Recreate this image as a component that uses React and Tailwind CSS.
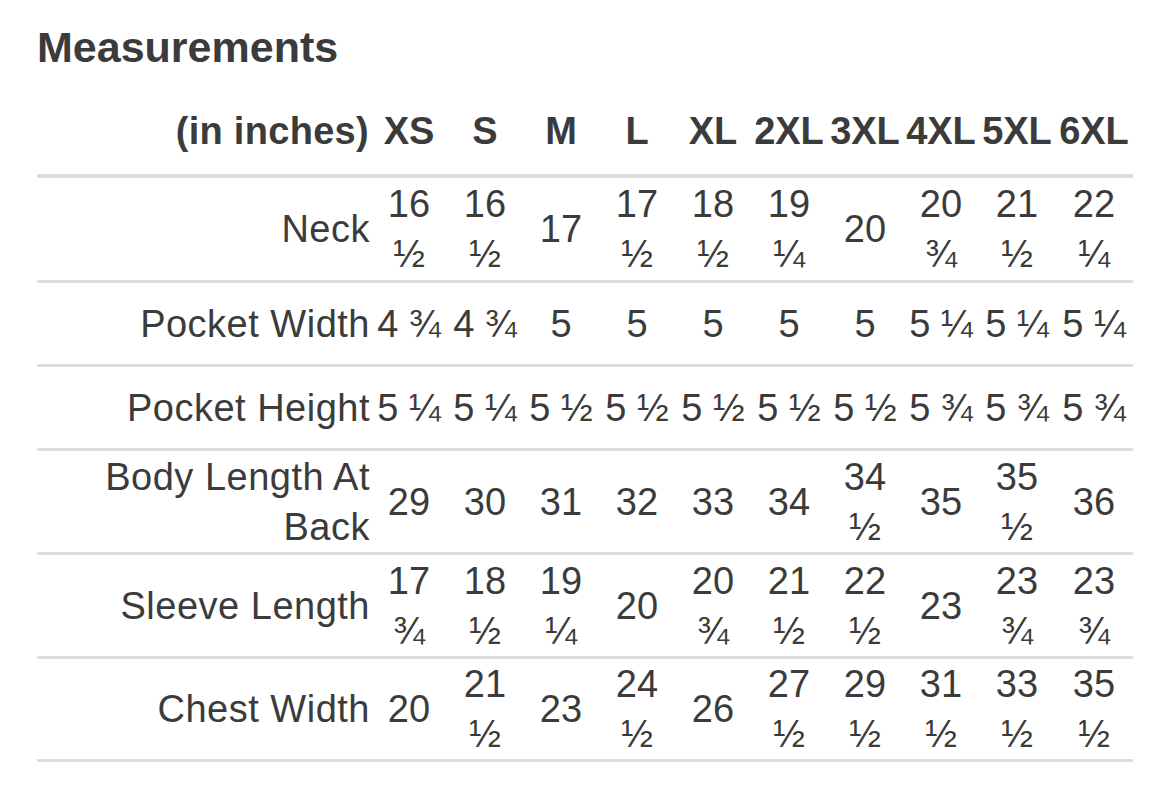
import React from 'react';

const SIZES = ['XS', 'S', 'M', 'L', 'XL', '2XL', '3XL', '4XL', '5XL', '6XL'];

// heights include the 3px bottom border
const ROWS = [
    {
        label: 'Neck',
        height: 'h-[105px]',
        values: ['16 ½', '16 ½', '17', '17 ½', '18 ½', '19 ¼', '20', '20 ¾', '21 ½', '22 ¼']
    },
    {
        label: 'Pocket Width',
        height: 'h-[84px]',
        values: ['4 ¾', '4 ¾', '5', '5', '5', '5', '5', '5 ¼', '5 ¼', '5 ¼']
    },
    {
        label: 'Pocket Height',
        height: 'h-[84px]',
        values: ['5 ¼', '5 ¼', '5 ½', '5 ½', '5 ½', '5 ½', '5 ½', '5 ¾', '5 ¾', '5 ¾']
    },
    {
        label: 'Body Length At Back',
        height: 'h-[104px]',
        values: ['29', '30', '31', '32', '33', '34', '34 ½', '35', '35 ½', '36']
    },
    {
        label: 'Sleeve Length',
        height: 'h-[104px]',
        values: ['17 ¾', '18 ½', '19 ¼', '20', '20 ¾', '21 ½', '22 ½', '23', '23 ¾', '23 ¾']
    },
    {
        label: 'Chest Width',
        height: 'h-[103px]',
        values: ['20', '21 ½', '23', '24 ½', '26', '27 ½', '29 ½', '31 ½', '33 ½', '35 ½']
    }
];

const GRID = 'grid grid-cols-[334px_repeat(9,76px)_78px] items-center';

const Measurements = () => {
    return (
        <div className="min-h-[797px] bg-white pl-[37px] pt-[21px] text-[#3b3b3b] font-['Liberation_Sans',Arial,sans-serif]">
            <h1 className="text-[43px] leading-[52px] font-bold">Measurements</h1>

            <div className="mt-[15px] w-[1096px]">
                {/* Size header */}
                <div className={`${GRID} h-[90px] border-b-4 border-[#dcdce1] text-[38px] leading-[50px] font-bold`}>
                    <div className="text-right pr-[2px] tracking-[0.3px]">(in inches)</div>
                    {SIZES.map((size) => (
                        <div key={size} className="text-center whitespace-nowrap">{size}</div>
                    ))}
                </div>

                {/* Body rows */}
                {ROWS.map((row) => (
                    <div key={row.label} className={`${GRID} ${row.height} border-b-[3px] border-[#dcdce1] text-[38px] leading-[50px]`}>
                        <div className="text-right pr-[1px] tracking-[0.5px]">
                            {row.label === 'Body Length At Back' ? (
                                <>Body Length At<br />Back</>
                            ) : row.label}
                        </div>
                        {row.values.map((value, i) => (
                            <div key={i} className="text-center">{value}</div>
                        ))}
                    </div>
                ))}
            </div>
        </div>
    );
};

export default Measurements;
